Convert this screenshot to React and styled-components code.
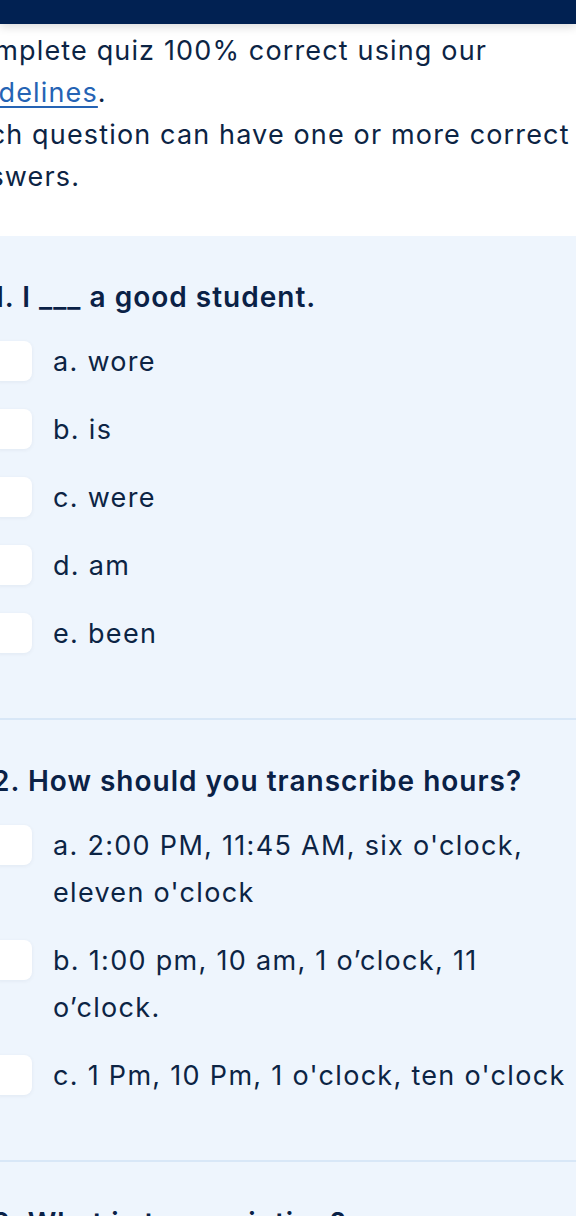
import React from "react";
import styled, { createGlobalStyle } from "styled-components";

const GlobalStyle = createGlobalStyle`
  body {
    margin: 0;
    background: #eef5fd;
    font-family: Inter, "Noto Sans", sans-serif;
    color: #0c2444;
  }
`;

const questions = [
  {
    number: 1,
    title: "I ___ a good student.",
    options: ["a. wore", "b. is", "c. were", "d. am", "e. been"],
  },
  {
    number: 2,
    title: "How should you transcribe hours?",
    options: [
      "a. 2:00 PM, 11:45 AM, six o'clock, eleven o'clock",
      "b. 1:00 pm, 10 am, 1 o’clock, 11 o’clock.",
      "c. 1 Pm, 10 Pm, 1 o'clock, ten o'clock",
    ],
  },
  {
    number: 3,
    title: "What is transcription?",
    options: ["a. Converting audio into text"],
  },
];

const App = () => {
  return (
    <Page>
      <GlobalStyle />
      <TopBar />
      <Intro>
        <IntroLine>
          Complete quiz 100% correct using our <Link href="#">guidelines</Link>.
        </IntroLine>
        <IntroLine>Each question can have one or more correct answers.</IntroLine>
      </Intro>
      <QuizList>
        {questions.map((q) => (
          <Question key={q.number}>
            <QuestionTitle>
              {q.number}. {q.title}
            </QuestionTitle>
            <Options>
              {q.options.map((opt) => (
                <Option key={opt}>
                  <Box />
                  <OptionText>{opt}</OptionText>
                </Option>
              ))}
            </Options>
          </Question>
        ))}
      </QuizList>
    </Page>
  );
};

export default App;

const Page = styled.div`
  width: 576px;
  height: 1216px;
  overflow: hidden;
  background: #eef5fd;
`;

const TopBar = styled.div`
  height: 24px;
  background: #012152;
  position: relative;
  z-index: 1;
  box-shadow: 0 3px 10px rgba(0, 0, 0, 0.14);
`;

const Intro = styled.div`
  background: #ffffff;
  margin-left: -44px;
  padding: 6px 0 38px;
`;

const IntroLine = styled.p`
  margin: 0;
  font-size: 27px;
  line-height: 42px;
  letter-spacing: 1.15px;
  color: #0c2444;
`;

const Link = styled.a`
  color: #2563b4;
  text-decoration: underline;
  text-underline-offset: 4px;
  text-decoration-thickness: 2px;
`;

const QuizList = styled.div`
  margin-left: -8px;
`;

const Question = styled.section`
  padding: 40px 0 61px;
  border-bottom: 2px solid #d8e7f7;
`;

const QuestionTitle = styled.h2`
  margin: 0 0 20px;
  font-size: 28px;
  line-height: 42px;
  font-weight: 600;
  letter-spacing: 1px;
  color: #0a2146;
`;

const Options = styled.div`
  display: flex;
  flex-direction: column;
  gap: 21px;
`;

const Option = styled.label`
  display: flex;
  align-items: flex-start;
  gap: 21px;
`;

const Box = styled.span`
  flex: 0 0 40px;
  height: 40px;
  margin-top: 3px;
  background: #ffffff;
  border-radius: 8px;
  box-shadow: 0 1px 4px rgba(12, 36, 68, 0.06);
`;

const OptionText = styled.span`
  font-size: 27px;
  line-height: 47px;
  letter-spacing: 1.3px;
  color: #0c2444;
`;
